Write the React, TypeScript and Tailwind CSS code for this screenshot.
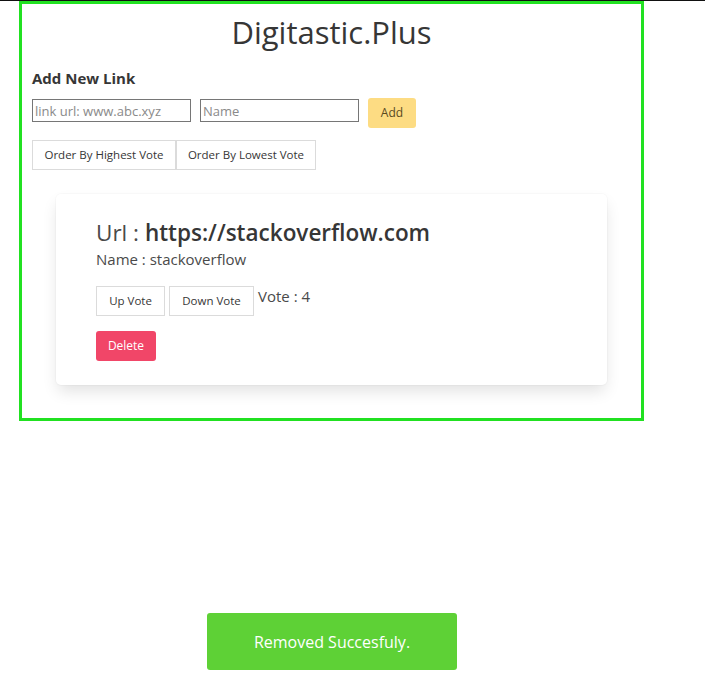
import React from "react";

const font = { fontFamily: '"Open Sans", "Noto Sans", sans-serif' };

function LinkCard() {
  return (
    <div className="mx-[24px] mt-[24px] rounded-[5px] bg-white pl-[40px] pt-[24px] pb-[24px] shadow-[0_8px_16px_-2px_rgba(10,10,10,0.12),0_0_0_1px_rgba(10,10,10,0.02)]">
      <p className="text-[22.5px] leading-[30px] text-[#4a4a4a]">
        Url : <span className="font-semibold text-[#363636]">https://stackoverflow.com</span>
      </p>
      <p className="text-[15px] leading-[22px] text-[#4a4a4a]">Name : stackoverflow</p>
      <div className="mt-[16px] flex items-start">
        <button className="h-[30px] w-[69px] border border-[#dbdbdb] bg-white text-[11.5px] text-[#363636]">
          Up Vote
        </button>
        <button className="ml-[4px] h-[30px] w-[85px] border border-[#dbdbdb] bg-white text-[11.5px] text-[#363636]">
          Down Vote
        </button>
        <span className="ml-[4px] text-[15px] leading-[20px] text-[#4a4a4a]">Vote : 4</span>
      </div>
      <button className="mt-[15px] h-[30px] w-[60px] rounded-[3px] bg-[#f14668] text-[12px] text-white">
        Delete
      </button>
    </div>
  );
}

export default function App() {
  return (
    <div className="relative h-[699px] w-[705px] border-t border-[#111] bg-white" style={font}>
      <div className="ml-[19px] h-[420px] w-[625px] border-[3px] border-[#21e121] px-[10px]">
        <h1 className="mt-[8px] text-center text-[31px] leading-[40px] text-[#363636]">Digitastic.Plus</h1>
        <h2 className="mt-[15px] text-[15px] font-bold leading-[22px] text-[#363636]">Add New Link</h2>
        <div className="mt-[9px] flex items-start gap-[9px]">
          <input
            className="mt-[1px] h-[23px] w-[159px] border border-[#767676] px-[2px] text-[13px] placeholder:text-[#8a8a8a] outline-none"
            placeholder="link url: www.abc.xyz"
          />
          <input
            className="mt-[1px] h-[23px] w-[159px] border border-[#767676] px-[2px] text-[13px] placeholder:text-[#8a8a8a] outline-none"
            placeholder="Name"
          />
          <button className="h-[30px] w-[48px] rounded-[3px] bg-[#fddc83] text-[12px] text-[#5a4a1e]">Add</button>
        </div>
        <div className="mt-[12px] flex">
          <button className="h-[30px] w-[144px] border border-[#dbdbdb] bg-white text-[11.5px] text-[#363636]">
            Order By Highest Vote
          </button>
          <button className="h-[30px] w-[140px] border border-[#dbdbdb] bg-white text-[11.5px] text-[#363636]">
            Order By Lowest Vote
          </button>
        </div>
        <LinkCard />
      </div>
      <div className="absolute left-[207px] top-[612px] flex h-[57px] w-[250px] items-center justify-center rounded-[3px] bg-[#5ed136] text-[16px] text-white">
        Removed Succesfuly.
      </div>
    </div>
  );
}
